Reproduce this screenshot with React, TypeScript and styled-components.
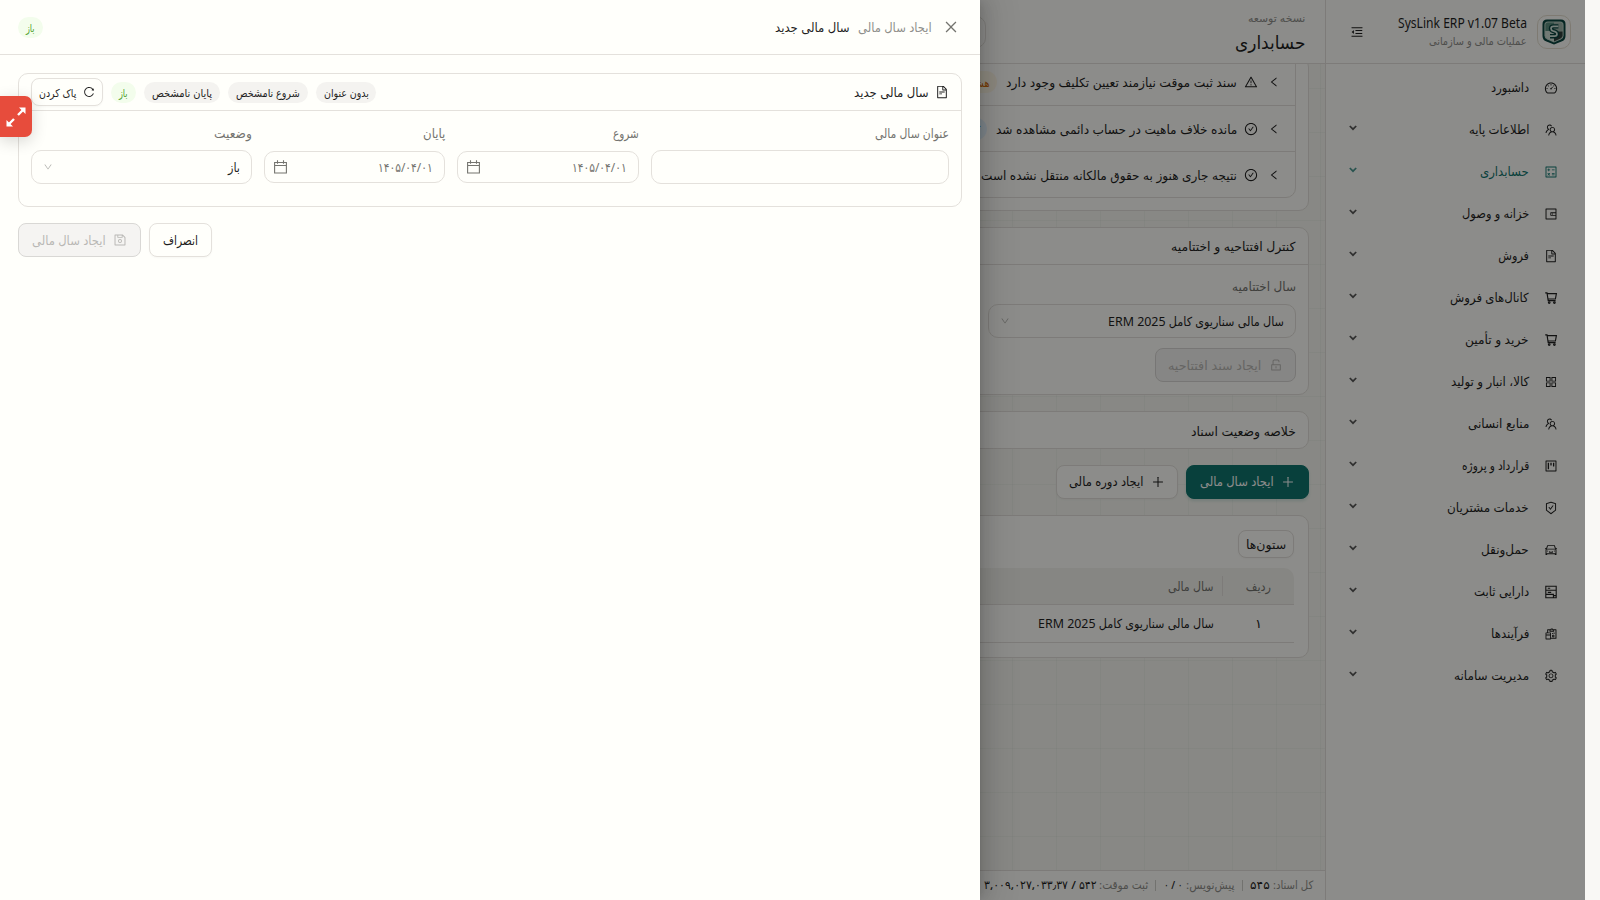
import React, { useLayoutEffect, useRef, useState } from "react";
import styled, { createGlobalStyle, css } from "styled-components";
import {
  AiOutlineDashboard, AiOutlineTeam, AiOutlineCalculator, AiOutlineWallet, AiOutlineFileText,
  AiOutlineAppstore, AiOutlineProject, AiOutlineSafetyCertificate, AiOutlineCar,
  AiOutlineReconciliation, AiOutlineSetting, AiOutlineMenuFold, AiOutlineWarning,
  AiOutlineCheckCircle, AiOutlineLeft, AiOutlineDown, AiOutlineUnlock, AiOutlinePlus, AiOutlineClose,
  AiOutlineReload, AiOutlineSave,
} from "react-icons/ai";

const c = {
  surface: "#fffffb",
  page: "#f7f8f2",
  line: "#e4e1dc",
  text: "#1f1f1f",
  muted: "#74746f",
  faint: "#8f8f8b",
  teal: "#0f766e",
};

const Global = createGlobalStyle`
  * { box-sizing: border-box; }
  html, body { margin: 0; height: 900px; overflow: hidden; }
  body { font-family: "Noto Sans", "DejaVu Sans Condensed", "DejaVu Sans", sans-serif; font-size: 12.5px; color: ${c.text}; background: #f9f8f5; }
  svg { display: block; flex: none; }
`;

const FitBox = styled.span<{ $w: number; $size?: number; $color?: string; $bold?: boolean }>`
  display: inline-block;
  flex: none;
  direction: rtl;
  text-align: right;
  white-space: nowrap;
  width: ${(p) => p.$w}px;
  line-height: 20px;
  height: 20px;
  font-size: ${(p) => p.$size ?? 12.5}px;
  font-weight: ${(p) => (p.$bold ? 500 : 400)};
  ${(p) => p.$color && css`color: ${p.$color};`}
`;
const FitInner = styled.span`
  display: inline-block;
  line-height: 20px;
  transform-origin: 100% 50%;
`;

type TextProps = { w: number; size?: number; color?: string; bold?: boolean; dy?: number; children: React.ReactNode };

/* A one-line label whose glyph run is condensed or widened to a fixed measure. */
function Text({ w, size, color, bold, dy = 1, children }: TextProps) {
  const ref = useRef<HTMLSpanElement>(null);
  const [scale, setScale] = useState(1);
  useLayoutEffect(() => {
    if (ref.current) setScale(w / ref.current.offsetWidth);
  }, [w]);
  return (
    <FitBox $w={w} $size={size} $color={color} $bold={bold}>
      <FitInner ref={ref} style={{ transform: `translateY(${dy}px) scaleX(${scale})` }}>{children}</FitInner>
    </FitBox>
  );
}

const Screen = styled.div`
  position: relative;
  width: 1600px;
  height: 900px;
  overflow: hidden;
  background: #f9f8f5;
`;
const Shell = styled.div`
  direction: rtl;
  display: flex;
  width: 1585px;
  height: 900px;
`;

const Sidebar = styled.aside`
  width: 260px;
  flex: none;
  background: ${c.surface};
  border-left: 1px solid ${c.line};
`;
const Brand = styled.div`
  height: 64px;
  border-bottom: 1px solid ${c.line};
  display: flex;
  align-items: center;
  padding: 0 14px 0 24px;
`;
const LogoBox = styled.div`
  width: 34px;
  height: 34px;
  border: 1px solid #e6dfd0;
  border-radius: 10px;
  display: grid;
  place-items: center;
`;
const BrandText = styled.div`
  margin-right: 10px;
  display: flex;
  flex-direction: column;
  height: 40px;
  margin-left: auto;
`;
const Menu = styled.nav`
  display: flex;
  flex-direction: column;
  padding-top: 3px;
`;
const MenuItem = styled.div<{ $active?: boolean }>`
  height: 42px;
  display: flex;
  align-items: center;
  gap: 15px;
  padding: 0 27px 0 23px;
  color: ${(p) => (p.$active ? c.teal : c.text)};
`;
const Caret = styled.span`
  margin-right: auto;
  margin-bottom: 4px;
  opacity: 0.75;
`;

const Main = styled.div`
  flex: 1;
  min-width: 0;
  display: flex;
  flex-direction: column;
  background-color: ${c.page};
  background-image: linear-gradient(to right, rgba(15, 80, 60, 0.03) 1px, transparent 1px),
    linear-gradient(to bottom, rgba(15, 80, 60, 0.03) 1px, transparent 1px);
  background-size: 44px 44px;
`;
const TopBar = styled.header`
  height: 64px;
  flex: none;
  background: ${c.surface};
  border-bottom: 1px solid ${c.line};
  display: flex;
  padding: 8px 20px 0 0;
`;
const TopTitles = styled.div`
  display: flex;
  flex-direction: column;
  gap: 4px;
`;
const TopSearch = styled.div`
  width: 300px;
  height: 32px;
  margin: 8px 249px 0 0;
  border: 1px solid ${c.line};
  border-radius: 10px;
`;
const Content = styled.div`
  flex: 1;
  overflow: hidden;
  padding: 0 16px;
`;
const Card = styled.section<{ $h?: number; $mt?: number }>`
  background: ${c.surface};
  border: 1px solid ${c.line};
  border-radius: 10px;
  margin-top: ${(p) => p.$mt ?? 16}px;
  height: ${(p) => p.$h}px;
`;
const CardHead = styled.div<{ $flat?: boolean }>`
  height: 37px;
  display: flex;
  align-items: center;
  padding: 0 12px;
  border-bottom: ${(p) => (p.$flat ? "0" : `1px solid ${c.line}`)};
`;
const CheckList = styled.div`
  margin: 0 12px;
  border: 1px solid ${c.line};
  border-radius: 0 0 10px 10px;
`;
const CheckRow = styled.div`
  height: 46px;
  display: flex;
  align-items: center;
  padding: 0 15px;
  & + & { border-top: 1px solid ${c.line}; }
  > svg:first-child { margin-left: 10px; }
  > svg + svg { margin-left: 7px; }
`;
const CheckTag = styled.span<{ $tone: "orange" | "blue" }>`
  height: 22px;
  border-radius: 11px;
  padding: 1px 7px;
  margin-right: 9px;
  background: ${(p) => (p.$tone === "orange" ? "#fff7e6" : "#e6f4ff")};
  color: ${(p) => (p.$tone === "orange" ? "#d46b08" : "#0958d9")};
`;
const CardBody = styled.div`
  padding: 13px 12px;
  display: flex;
  flex-direction: column;
  align-items: flex-start;
  > div { margin: 6px 0 10px; }
`;
const Field = styled.div<{ $w: number; $h?: number }>`
  width: ${(p) => p.$w}px;
  height: ${(p) => p.$h ?? 34}px;
  border: 1px solid ${c.line};
  border-radius: 10px;
  display: flex;
  align-items: center;
  justify-content: space-between;
  padding: 0 11px;
`;
const DateField = styled(Field)`
  padding-left: 9px;
`;
const Button = styled.button<{ $w: number; $h?: number; $kind?: "primary" | "disabled" }>`
  font: inherit;
  direction: rtl;
  width: ${(p) => p.$w}px;
  height: ${(p) => p.$h ?? 34}px;
  flex: none;
  border-radius: 8px;
  display: flex;
  align-items: center;
  justify-content: center;
  gap: 7px;
  padding: 0;
  border: 1px solid ${c.line};
  background: ${c.surface};
  color: ${c.text};
  box-shadow: 0 1px 2px rgba(0, 0, 0, 0.03);
  ${(p) => p.$kind === "primary" && css`background: ${c.teal}; border-color: ${c.teal}; color: #fff; box-shadow: 0 2px 3px rgba(15, 118, 110, 0.15);`}
  ${(p) => p.$kind === "disabled" && css`background: #f5f4f2; border-color: #d9d8d5; color: #b9b8b5; box-shadow: none;`}
`;
const Actions = styled.div`
  display: flex;
  gap: 8px;
  margin-top: 16px;
`;
const TableCard = styled(Card)`
  padding: 14px;
`;
const TableHead = styled.div`
  margin-top: 10px;
  height: 37px;
  background: #f5f4ef;
  border-bottom: 1px solid ${c.line};
  border-radius: 0 10px 0 0;
  display: flex;
  align-items: center;
`;
const TableRow = styled.div`
  height: 38px;
  border-bottom: 1px solid ${c.line};
  display: flex;
  align-items: center;
`;
const IndexCell = styled.div<{ $rule?: boolean }>`
  width: 72px;
  height: 20px;
  display: flex;
  justify-content: center;
  margin-left: 8px;
  border-left: 1px solid ${(p) => (p.$rule ? c.line : "transparent")};
`;
const Footer = styled.footer`
  height: 30px;
  flex: none;
  background: ${c.surface};
  border-top: 1px solid ${c.line};
  display: flex;
  align-items: center;
  padding: 0 12px;
  color: ${c.faint};
`;
const FootRule = styled.i`
  width: 1px;
  height: 11px;
  background: #d0cfca;
  margin: 0 7px;
`;

const Mask = styled.div`
  position: absolute;
  top: 0;
  left: 0;
  width: 1585px;
  height: 900px;
  background: rgba(0, 0, 0, 0.45);
`;
const Drawer = styled.div`
  position: absolute;
  top: 0;
  left: 0;
  width: 980px;
  height: 900px;
  direction: rtl;
  background: ${c.surface};
  box-shadow: 6px 0 16px rgba(0, 0, 0, 0.1), 3px 0 6px -4px rgba(0, 0, 0, 0.14), 9px 0 28px 8px rgba(0, 0, 0, 0.07);
`;
const DrawerHead = styled.div`
  height: 55px;
  border-bottom: 1px solid ${c.line};
  display: flex;
  align-items: center;
  padding: 0 21px 0 18px;
`;
const Pill = styled.span<{ $w: number; $green?: boolean }>`
  width: ${(p) => p.$w}px;
  height: 21px;
  border-radius: 11px;
  display: flex;
  justify-content: center;
  background: ${(p) => (p.$green ? "#f3fdec" : "#f4f3f0")};
  color: ${(p) => (p.$green ? "#4f9f2a" : c.text)};
`;
const DrawerBody = styled.div`
  padding: 18px;
`;
const Tags = styled.div`
  margin-right: auto;
  display: flex;
  align-items: center;
  gap: 8px;
`;
const FormGrid = styled.div`
  display: flex;
  gap: 12px;
  padding: 12px;
`;
const FormItem = styled.div`
  display: flex;
  flex-direction: column;
  height: 61px;
`;
const Control = styled.div`
  flex: 1;
  display: flex;
  align-items: flex-end;
  height: 34px;
`;
const DateControl = styled(Control)`
  align-items: center;
  padding-top: 7px;
`;
const DrawerActions = styled(Actions)`
  justify-content: flex-end;
`;
const Gap = styled.span<{ $w: number }>`
  width: ${(p) => p.$w}px;
  flex: none;
`;
const ExpandHandle = styled.div`
  position: absolute;
  top: 96px;
  left: 0;
  width: 32px;
  height: 41px;
  border-radius: 0 7px 7px 0;
  background: #e74c3c;
  box-shadow: 0 4px 16px rgba(0, 0, 0, 0.16);
  display: grid;
  place-items: center;
`;

function CartIcon() {
  return (
    <svg width="14" height="14" viewBox="0 0 14 14" fill="none" stroke="currentColor" strokeWidth="1.15">
      <path d="M1.2 1.8H3L4.2 9.6H11.6M3.2 2.6H12.4L11.4 8H4" />
      <circle cx="5.2" cy="11.5" r="0.8" />
      <circle cx="10.4" cy="11.5" r="0.8" />
    </svg>
  );
}

function AssetIcon() {
  return (
    <svg width="14" height="14" viewBox="0 0 14 14" fill="none" stroke="currentColor" strokeWidth="1.1">
      <path d="M1.8 1.3H12.2V12.7H1.8ZM1.8 5.3H12.2M3.8 3.3H6.2M3.8 7.4H7.2M1.8 9.4H9.4V12.7M9.4 10.6H12" />
    </svg>
  );
}

const menu: { label: string; w: number; Icon: React.ElementType; leaf?: boolean; active?: boolean }[] = [
  { label: "داشبورد", w: 38, Icon: AiOutlineDashboard, leaf: true },
  { label: "اطلاعات پایه", w: 60, Icon: AiOutlineTeam },
  { label: "حسابداری", w: 49, Icon: AiOutlineCalculator, active: true },
  { label: "خزانه و وصول", w: 67, Icon: AiOutlineWallet },
  { label: "فروش", w: 31, Icon: AiOutlineFileText },
  { label: "کانال‌های فروش", w: 79, Icon: CartIcon },
  { label: "خرید و تأمین", w: 64, Icon: CartIcon },
  { label: "کالا، انبار و تولید", w: 78, Icon: AiOutlineAppstore },
  { label: "منابع انسانی", w: 61, Icon: AiOutlineTeam },
  { label: "قرارداد و پروژه", w: 67, Icon: AiOutlineProject },
  { label: "خدمات مشتریان", w: 82, Icon: AiOutlineSafetyCertificate },
  { label: "حمل‌ونقل", w: 48, Icon: AiOutlineCar },
  { label: "دارایی ثابت", w: 55, Icon: AssetIcon },
  { label: "فرآیندها", w: 39, Icon: AiOutlineReconciliation },
  { label: "مدیریت سامانه", w: 75, Icon: AiOutlineSetting },
];

function Chevron() {
  return (
    <svg width="8" height="6" viewBox="0 0 8 6" fill="none" stroke="currentColor" strokeWidth="1.7">
      <path d="M0.8 1L4 4.2L7.2 1" />
    </svg>
  );
}

function Logo() {
  return (
    <svg width="24" height="26" viewBox="0 0 24 26">
      <path d="M5 0.5H19Q23.5 0.5 23.5 5V17Q23.5 21 19.5 22.6L12 25.6L4.5 22.6Q0.5 21 0.5 17V5Q0.5 0.5 5 0.5Z" fill="#0b4641" />
      <path d="M6 2.4H18Q21.6 2.4 21.6 6V16.4Q21.6 19.4 18.8 20.6L12 23.5L5.2 20.6Q2.4 19.4 2.4 16.4V6Q2.4 2.4 6 2.4Z" fill="#b9cfc4" />
      <path d="M6 3.4H12V12H3.4V6Q3.4 3.4 6 3.4Z" fill="#5d8f80" />
      <path d="M12 3.4H18Q20.6 3.4 20.6 6V12.4H12Z" fill="#9fb5aa" />
      <path d="M3.4 12H12V22.4L5.4 19.6Q3.4 18.6 3.4 16.2Z" fill="#cfded5" />
      <path d="M12 12.4H20.6V16.2Q20.6 18.6 18.6 19.6L12 22.4Z" fill="#30403d" />
      <path d="M16.4 7.4H11.6Q9 7.4 9 9.6Q9 11.4 11 12L13 12.6Q15 13.2 15 15Q15 17.2 12.6 17.2H8" fill="none" stroke="#0b4641" strokeWidth="4.4" />
      <path d="M16.4 7.4H11.6Q9 7.4 9 9.6Q9 11.4 11 12L13 12.6Q15 13.2 15 15Q15 17.2 12.6 17.2H8" fill="none" stroke="#d4e6dc" strokeWidth="1.7" />
    </svg>
  );
}

function DateIcon() {
  return (
    <svg width="13" height="14" viewBox="0 0 13 14" fill="none" stroke="#74746f" strokeWidth="1.1">
      <path d="M0.6 2.5H12.4V13H0.6ZM0.6 5.5H12.4M3.5 0.3V3.8M9.5 0.3V3.8" />
    </svg>
  );
}

export default function App() {
  return (
    <Screen>
      <Global />
      <Shell>
        <Sidebar>
          <Brand>
            <LogoBox><Logo /></LogoBox>
            <BrandText>
              <Text w={129} size={13.5}>SysLink ERP v1.07 Beta</Text>
              <Text w={98} size={11} color={c.faint} dy={-1}>عملیات مالی و سازمانی</Text>
            </BrandText>
            <AiOutlineMenuFold size={14} />
          </Brand>
          <Menu>
            {menu.map(({ label, w, Icon, active, leaf }) => (
              <MenuItem key={label} $active={active}>
                <Icon size={14} />
                <Text w={w} dy={0}>{label}</Text>
                {!leaf && <Caret><Chevron /></Caret>}
              </MenuItem>
            ))}
          </Menu>
        </Sidebar>
        <Main>
          <TopBar>
            <TopTitles>
              <Text w={57} size={11} color={c.faint} dy={0}>نسخه توسعه</Text>
              <Text w={70} size={18} dy={0}>حسابداری</Text>
            </TopTitles>
            <TopSearch />
          </TopBar>
          <Content>
            <Card $h={154} $mt={-7}>
              <CheckList>
                <CheckRow>
                  <AiOutlineLeft size={12} />
                  <AiOutlineWarning size={14} />
                  <Text w={231}>سند ثبت موقت نیازمند تعیین تکلیف وجود دارد</Text>
                  <CheckTag $tone="orange"><Text w={28} size={11}>هشدار</Text></CheckTag>
                </CheckRow>
                <CheckRow>
                  <AiOutlineLeft size={12} />
                  <AiOutlineCheckCircle size={14} />
                  <Text w={241}>مانده خلاف ماهیت در حساب دائمی مشاهده شد</Text>
                  <CheckTag $tone="blue"><Text w={28} size={11}>کنترل</Text></CheckTag>
                </CheckRow>
                <CheckRow>
                  <AiOutlineLeft size={12} />
                  <AiOutlineCheckCircle size={14} />
                  <Text w={256}>نتیجه جاری هنوز به حقوق مالکانه منتقل نشده است</Text>
                </CheckRow>
              </CheckList>
            </Card>
            <Card $h={168}>
              <CardHead><Text w={125}>کنترل افتتاحیه و اختتامیه</Text></CardHead>
              <CardBody>
                <Text w={64} color={c.muted} dy={-1}>سال اختتامیه</Text>
                <Field $w={308}>
                  <Text w={176}>سال مالی سناریوی کامل ERM 2025</Text>
                  <AiOutlineDown size={10} color="#b0b0ac" />
                </Field>
                <Button $w={141} $kind="disabled">
                  <AiOutlineUnlock size={14} />
                  <Text w={93}>ایجاد سند افتتاحیه</Text>
                </Button>
              </CardBody>
            </Card>
            <Card $h={38}>
              <CardHead $flat><Text w={105}>خلاصه وضعیت اسناد</Text></CardHead>
            </Card>
            <Actions>
              <Button $w={123} $kind="primary"><AiOutlinePlus size={14} /><Text w={74} bold dy={0}>ایجاد سال مالی</Text></Button>
              <Button $w={122}><AiOutlinePlus size={14} /><Text w={74} dy={0}>ایجاد دوره مالی</Text></Button>
            </Actions>
            <TableCard $h={143}>
              <Button $w={56} $h={28}><Text w={40}>ستون‌ها</Text></Button>
              <TableHead>
                <IndexCell $rule><Text w={25} color={c.muted}>ردیف</Text></IndexCell>
                <Text w={46} color={c.muted}>سال مالی</Text>
              </TableHead>
              <TableRow>
                <IndexCell><Text w={7} dy={0}>۱</Text></IndexCell>
                <Text w={176} dy={0}>سال مالی سناریوی کامل ERM 2025</Text>
              </TableRow>
            </TableCard>
          </Content>
          <Footer>
            <Text w={40} size={11.5} dy={-1}>کل اسناد:</Text>&nbsp;<Text w={20} size={11.5} bold dy={-1} color={c.text}>۵۴۵</Text>
            <FootRule />
            <Text w={49} size={11.5} dy={-1}>پیش‌نویس:</Text>&nbsp;<Text w={19} size={11.5} bold dy={-1} color={c.text}>۰ / ۰</Text>
            <FootRule />
            <Text w={49} size={11.5} dy={-1}>ثبت موقت:</Text>&nbsp;<Text w={113} size={11.5} bold dy={-1} color={c.text}>۵۴۲ / ۳,۰۰۹,۰۲۷,۰۳۳٫۳۷</Text>
          </Footer>
        </Main>
      </Shell>
      <Mask />
      <Drawer>
        <DrawerHead>
          <AiOutlineClose size={16} color="#74746f" />
          <Gap $w={11} />
          <Text w={74} color={c.faint}>ایجاد سال مالی</Text>
          <Gap $w={8} />
          <Text w={75} bold>سال مالی جدید</Text>
          <Tags><Pill $w={25} $green><Text w={9} size={11}>باز</Text></Pill></Tags>
        </DrawerHead>
        <DrawerBody>
          <Card $h={134} $mt={0}>
            <CardHead>
              <AiOutlineFileText size={14} />
              <Gap $w={6} />
              <Text w={75}>سال مالی جدید</Text>
              <Tags>
                <Pill $w={60}><Text w={45} size={11}>بدون عنوان</Text></Pill>
                <Pill $w={80}><Text w={64} size={11}>شروع نامشخص</Text></Pill>
                <Pill $w={76}><Text w={60} size={11}>پایان نامشخص</Text></Pill>
                <Pill $w={25} $green><Text w={9} size={11}>باز</Text></Pill>
                <Button $w={72} $h={28}><AiOutlineReload size={12} /><Text w={37} size={11}>پاک کردن</Text></Button>
              </Tags>
            </CardHead>
            <FormGrid>
              <FormItem>
                <Text w={74} color={c.muted}>عنوان سال مالی</Text>
                <Control><Field $w={298} /></Control>
              </FormItem>
              <FormItem>
                <Text w={26} color={c.muted}>شروع</Text>
                <DateControl><DateField $w={182} $h={32}><Text w={55} color={c.muted}>۱۴۰۵/۰۴/۰۱</Text><DateIcon /></DateField></DateControl>
              </FormItem>
              <FormItem>
                <Text w={22} color={c.muted}>پایان</Text>
                <DateControl><DateField $w={181} $h={32}><Text w={55} color={c.muted}>۱۴۰۵/۰۴/۰۱</Text><DateIcon /></DateField></DateControl>
              </FormItem>
              <FormItem>
                <Text w={38} color={c.muted}>وضعیت</Text>
                <Control><Field $w={221}><Text w={12}>باز</Text><AiOutlineDown size={10} color="#b0b0ac" /></Field></Control>
              </FormItem>
            </FormGrid>
          </Card>
          <DrawerActions>
            <Button $w={63}><Text w={35}>انصراف</Text></Button>
            <Button $w={123} $kind="disabled"><AiOutlineSave size={14} /><Text w={74}>ایجاد سال مالی</Text></Button>
          </DrawerActions>
        </DrawerBody>
        <ExpandHandle>
          <svg width="20" height="20" viewBox="0 0 20 20" fill="#fff" stroke="#fff">
            <path d="M12 8L17 3M8 12L3 17" strokeWidth="2.4" />
            <path d="M13 0.5H19.5V7ZM0.5 13V19.5H7Z" stroke="none" />
          </svg>
        </ExpandHandle>
      </Drawer>
    </Screen>
  );
}
